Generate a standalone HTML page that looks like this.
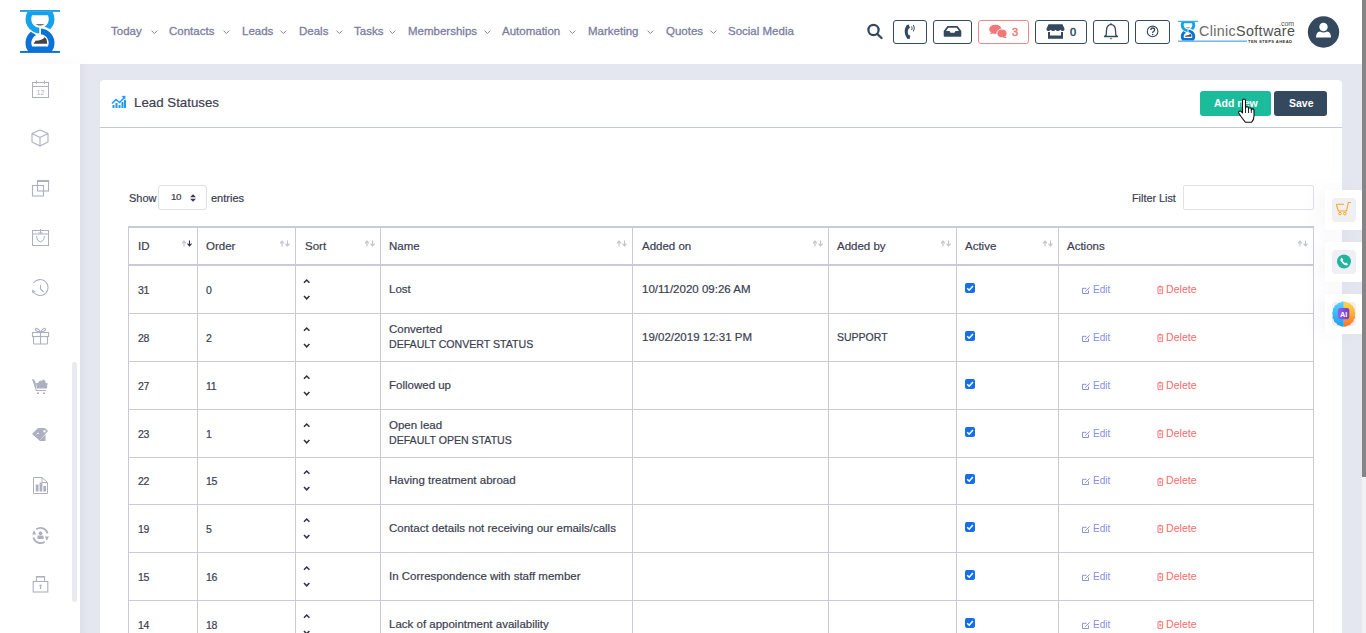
<!DOCTYPE html>
<html><head><meta charset="utf-8">
<style>
*{box-sizing:border-box;margin:0;padding:0}
html,body{width:1366px;height:633px;overflow:hidden;background:#e4e7ef;font-family:"Liberation Sans",sans-serif;}
.a{position:absolute}
svg{position:absolute;overflow:visible}
#header{position:absolute;left:0;top:0;width:1362px;height:64px;background:#fff}
#sidebar{position:absolute;left:0;top:64px;width:80px;height:569px;background:#fff}
.nav{position:absolute;top:24px;font-size:11.5px;color:#7c7d9e;-webkit-text-stroke:0.3px #7c7d9e;white-space:nowrap;line-height:14px}
.hbtn{position:absolute;top:20px;height:24px;border:1.5px solid #34495e;border-radius:3px}
#card{position:absolute;left:100px;top:80px;width:1242px;height:600px;background:#fff;border-radius:4px}
#track{position:absolute;left:1362px;top:0;width:4px;height:633px;background:#f1f1f1}
#thumb{position:absolute;left:1362px;top:0;width:4px;height:477px;background:#858585}
.t{position:absolute;white-space:nowrap;font-size:11.5px;color:#3b3e50;line-height:14px;-webkit-text-stroke:0.2px #3b3e50}
.vl{position:absolute;width:1px;background:#c9ccd8}
.hl{position:absolute;height:1px;background:#c9ccd8}
.edit{position:absolute;white-space:nowrap;font-size:10px;color:#8a8fe0;line-height:12px}
.del{position:absolute;white-space:nowrap;font-size:10.6px;color:#f26b6b;line-height:12px}
.cb{position:absolute;width:10px;height:10px;background:#1a73e8;border-radius:2px}
</style></head><body>
<div id="header"></div>
<div id="sidebar"></div>
<div class="a" style="left:80px;top:64px;width:8px;height:569px;background:linear-gradient(90deg,#dde0e8,#e4e7ef)"></div>
<div id="card"></div>

<svg style="left:0;top:0" width="80" height="64" viewBox="0 0 80 64">
<defs><clipPath id="ct"><polygon points="0,0 80,0 80,44 41,24.8 39.3,24.8 39.3,64 0,64"/></clipPath>
<clipPath id="cb"><polygon points="41,0 80,0 80,64 0,64 0,12.1 41,38.3"/></clipPath></defs>
<rect x="20" y="10" width="40" height="1.9" fill="#1d9ee8"/>
<rect x="20" y="51" width="40" height="1.9" fill="#0b6fd4"/>
<g clip-path="url(#cb)"><path d="M28.25 51.5 A14.5 14.5 0 1 1 51.75 51.5 Z M32.04 46.5 L47.96 46.5 A8.7 8.7 0 1 0 32.04 46.5 Z" fill="#0b72d8" fill-rule="evenodd"/></g>
<g clip-path="url(#ct)"><path d="M27.36 11.9 L52.64 11.9 A14.5 14.5 0 1 1 27.36 11.9 Z M32.06 15.2 L47.94 15.2 A8.8 8.8 0 1 1 32.06 15.2 Z" fill="#15a2ea" fill-rule="evenodd"/></g>
<path d="M35.5 24.2 Q40 26.8 44.6 24.2 Z" fill="#444"/>
<path d="M33.6 43.7 L47.2 43.7 L46.6 39.5 L44.8 37.2 Q42 40.6 35.5 40.8 Z" fill="#444"/>
</svg>
<div class="a" style="left:5px;top:52px;width:90px;height:12px;overflow:hidden"><div style="position:absolute;left:0;top:0;width:90px;height:24px;border-radius:50%;background:radial-gradient(ellipse at center,rgba(0,0,0,0.018),rgba(0,0,0,0.0) 70%)"></div></div>

<div class="nav" style="left:111px">Today</div>
<svg style="left:151px;top:30.3px" width="8" height="5" viewBox="0 0 8 5"><path d="M0.5 0.6 L3.4 3.5 L6.3 0.6" fill="none" stroke="#8585a5" stroke-width="1"/></svg>
<div class="nav" style="left:169px">Contacts</div>
<svg style="left:223px;top:30.3px" width="8" height="5" viewBox="0 0 8 5"><path d="M0.5 0.6 L3.4 3.5 L6.3 0.6" fill="none" stroke="#8585a5" stroke-width="1"/></svg>
<div class="nav" style="left:242px">Leads</div>
<svg style="left:280px;top:30.3px" width="8" height="5" viewBox="0 0 8 5"><path d="M0.5 0.6 L3.4 3.5 L6.3 0.6" fill="none" stroke="#8585a5" stroke-width="1"/></svg>
<div class="nav" style="left:299px">Deals</div>
<svg style="left:335.7px;top:30.3px" width="8" height="5" viewBox="0 0 8 5"><path d="M0.5 0.6 L3.4 3.5 L6.3 0.6" fill="none" stroke="#8585a5" stroke-width="1"/></svg>
<div class="nav" style="left:354px">Tasks</div>
<svg style="left:389.3px;top:30.3px" width="8" height="5" viewBox="0 0 8 5"><path d="M0.5 0.6 L3.4 3.5 L6.3 0.6" fill="none" stroke="#8585a5" stroke-width="1"/></svg>
<div class="nav" style="left:408px">Memberships</div>
<svg style="left:484px;top:30.3px" width="8" height="5" viewBox="0 0 8 5"><path d="M0.5 0.6 L3.4 3.5 L6.3 0.6" fill="none" stroke="#8585a5" stroke-width="1"/></svg>
<div class="nav" style="left:502px">Automation</div>
<svg style="left:569.4px;top:30.3px" width="8" height="5" viewBox="0 0 8 5"><path d="M0.5 0.6 L3.4 3.5 L6.3 0.6" fill="none" stroke="#8585a5" stroke-width="1"/></svg>
<div class="nav" style="left:588px">Marketing</div>
<svg style="left:646.7px;top:30.3px" width="8" height="5" viewBox="0 0 8 5"><path d="M0.5 0.6 L3.4 3.5 L6.3 0.6" fill="none" stroke="#8585a5" stroke-width="1"/></svg>
<div class="nav" style="left:666px">Quotes</div>
<svg style="left:709.8px;top:30.3px" width="8" height="5" viewBox="0 0 8 5"><path d="M0.5 0.6 L3.4 3.5 L6.3 0.6" fill="none" stroke="#8585a5" stroke-width="1"/></svg>
<div class="nav" style="left:728px">Social Media</div>

<svg style="left:862px;top:20px" width="26" height="24" viewBox="0 0 26 24"><circle cx="11.5" cy="10" r="5.1" fill="none" stroke="#34495e" stroke-width="2.3"/><path d="M15.3 14 L19.5 18" stroke="#34495e" stroke-width="2.4" stroke-linecap="round"/></svg>
<div class="hbtn" style="left:893px;width:34px"></div>
<svg style="left:893px;top:20px" width="34" height="24" viewBox="0 0 34 24">
<path d="M13.5 5.2 L15.8 4.4 L17 8 L15.3 9 Q14 12 15.5 15 L17.3 15.6 L16.6 19 L14.2 18.8 Q9.5 12 13.5 5.2 Z" fill="#34495e"/>
<path d="M18.6 6.5 Q19.8 8.2 18.6 10" fill="none" stroke="#34495e" stroke-width="1"/><path d="M20.4 5 Q22.3 8.2 20.4 11.4" fill="none" stroke="#34495e" stroke-width="1"/>
</svg>
<div class="hbtn" style="left:933px;width:39px"></div>
<svg style="left:933px;top:20px" width="39" height="24" viewBox="0 0 39 24">
<path d="M14.5 6 L24.5 6 L28.3 11 L28.3 16 Q28.3 16.8 27.5 16.8 L11.5 16.8 Q10.7 16.8 10.7 16 L10.7 11 Z M13 11 L16.5 11 L17.5 12.8 L21.5 12.8 L22.5 11 L26 11 L23.7 7.8 L15.3 7.8 Z" fill="#34495e" fill-rule="evenodd"/>
</svg>
<div class="hbtn" style="left:978px;width:51px;border-color:#f28686"></div>
<svg style="left:978px;top:20px" width="51" height="24" viewBox="0 0 51 24">
<ellipse cx="17.4" cy="9.3" rx="6.2" ry="4.6" fill="#f07878"/><path d="M13 12.5 L11.5 14.3 L15.5 13.3 Z" fill="#f07878"/>
<ellipse cx="24" cy="13.4" rx="5.1" ry="4.4" fill="#f07878" stroke="#fff" stroke-width="0.9"/><path d="M27.3 16.3 L29 18 L24.5 17.7 Z" fill="#f07878"/>
</svg>
<div class="a" style="left:1012px;top:25px;font-size:11px;line-height:14px;color:#f07878;-webkit-text-stroke:0.5px #f07878">3</div>
<div class="hbtn" style="left:1035px;width:52px"></div>
<svg style="left:1035px;top:20px" width="52" height="24" viewBox="0 0 52 24">
<path d="M13.5 4.3 L27.5 4.3 L29.6 9 Q29.6 11 27.8 11 Q26 11 25.3 9.8 Q24.3 11 22.8 11 Q21.3 11 20.5 9.8 Q19.7 11 18.2 11 Q16.7 11 15.7 9.8 Q15 11 13.2 11 Q11.4 11 11.4 9 Z" fill="#34495e"/>
<path d="M13 12 L15 12 L15 15.5 L26 15.5 L26 12 L28 12 L28 18.7 L13 18.7 Z" fill="#34495e"/>
</svg>
<div class="a" style="left:1070px;top:25px;font-size:11px;line-height:14px;color:#34495e;-webkit-text-stroke:0.5px #34495e">0</div>
<div class="hbtn" style="left:1093px;width:36px"></div>
<svg style="left:1093px;top:20px" width="36" height="24" viewBox="0 0 36 24">
<path d="M18 4.3 Q22.5 5 22.5 10.5 L22.8 15 L24.5 16.5 L11.5 16.5 L13.2 15 L13.5 10.5 Q13.5 5 18 4.3 Z" fill="none" stroke="#34495e" stroke-width="1.3" stroke-linejoin="round"/>
<path d="M16.5 18.3 L19.5 18.3 L18 19.5 Z" fill="#34495e"/><circle cx="18" cy="4" r="0.8" fill="#34495e"/>
</svg>
<div class="hbtn" style="left:1135px;width:35px"></div>
<svg style="left:1135px;top:20px" width="35" height="24" viewBox="0 0 35 24">
<circle cx="17.6" cy="11.4" r="5.3" fill="none" stroke="#34495e" stroke-width="1.1"/>
<path d="M15.8 10 Q15.8 8 17.7 8 Q19.6 8 19.6 9.8 Q19.6 11 18.4 11.5 Q17.7 11.9 17.7 13" fill="none" stroke="#34495e" stroke-width="1.3"/><circle cx="17.7" cy="14.6" r="0.8" fill="#34495e"/>
</svg>


<svg style="left:1176px;top:19px" width="124" height="26" viewBox="0 0 124 26">
<g transform="translate(2,1.8) scale(0.5,0.4745) translate(-20,-10)">
<defs><clipPath id="ct2"><polygon points="0,0 80,0 80,44 41,24.8 39.3,24.8 39.3,64 0,64"/></clipPath>
<clipPath id="cb2"><polygon points="41,0 80,0 80,64 0,64 0,12.1 41,38.3"/></clipPath></defs>
<rect x="20" y="10" width="40" height="2.2" fill="#1d9ee8"/>
<g clip-path="url(#cb2)"><path d="M28.25 51.5 A14.5 14.5 0 1 1 51.75 51.5 Z M32.04 46.5 L47.96 46.5 A8.7 8.7 0 1 0 32.04 46.5 Z" fill="#0b72d8" fill-rule="evenodd"/></g>
<g clip-path="url(#ct2)"><path d="M27.36 11.9 L52.64 11.9 A14.5 14.5 0 1 1 27.36 11.9 Z M32.06 15.2 L47.94 15.2 A8.8 8.8 0 1 1 32.06 15.2 Z" fill="#15a2ea" fill-rule="evenodd"/></g>
<path d="M35.5 24.2 Q40 26.8 44.6 24.2 Z" fill="#555"/>
<path d="M33.6 43.7 L47.2 43.7 L46.6 39.5 L44.8 37.2 Q42 40.6 35.5 40.8 Z" fill="#555"/>
</g>
<rect x="2" y="21.6" width="69" height="1.1" fill="#3a9be6"/>
</svg>
<div class="a" style="left:1199px;top:21.8px;font-size:14.3px;line-height:18px;color:#6a6a6a;letter-spacing:0.35px;white-space:nowrap">Clinic<span style="color:#505050">Software</span></div>
<div class="a" style="left:1279px;top:20px;font-size:7px;line-height:8px;color:#555;white-space:nowrap">.com</div>
<div class="a" style="left:1248px;top:38.5px;font-size:4.2px;line-height:5px;color:#333;font-weight:bold;letter-spacing:0.35px;white-space:nowrap">TEN STEPS AHEAD</div>
<svg style="left:1307px;top:16px" width="33" height="33" viewBox="0 0 33 33">
<circle cx="16.5" cy="16" r="15.7" fill="#34495e"/>
<circle cx="16.5" cy="11" r="4.2" fill="#fff"/>
<path d="M9 21.5 Q9 16 13 15.5 Q16.5 17.3 20 15.5 Q24 16 24 21.5 Z" fill="#fff"/>
</svg>

<svg style="left:24px;top:73px" width="32" height="32" viewBox="0 0 32 32"><g fill="none" stroke="#adb0c0" stroke-width="1"><rect x="8.5" y="9.5" width="16" height="15"/><path d="M8.5 13.5 H24.5 M12.5 7.5 V11 M20.5 7.5 V11"/></g><text x="16.5" y="22" font-size="7" text-anchor="middle" fill="#adb0c0" font-family="Liberation Sans">12</text></svg>
<svg style="left:24px;top:122px" width="32" height="32" viewBox="0 0 32 32"><g fill="none" stroke="#adb0c0" stroke-width="1.1" stroke-linejoin="round"><path d="M16 8 L24 11.5 L24 20 L16 24 L8 20 L8 11.5 Z M8 11.5 L16 15.5 L24 11.5 M16 15.5 V24"/></g></svg>
<svg style="left:24px;top:172px" width="32" height="32" viewBox="0 0 32 32"><g fill="none" stroke="#adb0c0" stroke-width="1.1"><rect x="8.5" y="13.5" width="11" height="10.5"/><rect x="13.5" y="8.5" width="11" height="10.5"/><path d="M13.5 9 H24.5" stroke-width="2"/></g></svg>
<svg style="left:24px;top:221px" width="32" height="32" viewBox="0 0 32 32"><g fill="none" stroke="#adb0c0" stroke-width="1"><rect x="8.5" y="9.5" width="16" height="15"/><path d="M8.5 13 H24.5 M16.5 8 V13 M14.5 11 L16.5 13 L18.5 11 M12.5 15 Q12.5 20 16.5 21 Q20.5 20 20.5 15"/></g></svg>
<svg style="left:24px;top:272px" width="32" height="32" viewBox="0 0 32 32"><g fill="none" stroke="#adb0c0" stroke-width="1.1"><path d="M9.5 11 A8 8 0 1 1 9.8 20.5"/><path d="M16.5 13 V17 L19.5 20"/></g><path d="M8 17.5 L11.5 19.5 L8.5 21.5 Z" fill="#adb0c0"/></svg>
<svg style="left:24px;top:320px" width="32" height="32" viewBox="0 0 32 32"><g fill="none" stroke="#adb0c0" stroke-width="1.1"><rect x="8.5" y="12.5" width="16" height="4"/><rect x="9.5" y="16.5" width="14" height="7.5" rx="1"/><path d="M16.5 12.5 V24 M16.5 12 Q13 7 11.5 9 Q10.5 11 16.5 12 M16.5 12 Q20 7 21.5 9 Q22.5 11 16.5 12"/></g></svg>
<svg style="left:24px;top:370px" width="32" height="32" viewBox="0 0 32 32"><path d="M8 9 Q10 8.5 11.5 12 L12.5 20 L22 20 L22 21 L12 21 Z" fill="#adb0c0"/><path d="M12 13 L23.5 13 L23 18.5 L12.8 18.5 Z" fill="#adb0c0"/><path d="M14 13 Q16 9.5 18 11 Q19.5 8 21.5 11.5 L21.5 13 Z" fill="#adb0c0"/><rect x="13" y="22.5" width="2" height="1.5" fill="#adb0c0"/><rect x="19" y="22.5" width="2" height="1.5" fill="#adb0c0"/></svg>
<svg style="left:24px;top:419px" width="32" height="32" viewBox="0 0 32 32"><path d="M14 9 L21 9 L24 12 L15.5 21.5 L8 15 Z" fill="#adb0c0"/><path d="M21.5 15.5 L21.5 22 L15 22 Z" fill="#adb0c0"/><circle cx="20.5" cy="12.3" r="1.2" fill="#fff"/><path d="M12.5 15.5 Q14 13 15 14.5" stroke="#fff" stroke-width="0.9" fill="none"/></svg>
<svg style="left:24px;top:469px" width="32" height="32" viewBox="0 0 32 32"><g fill="none" stroke="#adb0c0" stroke-width="1"><path d="M9.5 8.5 H18 L23.5 13.5 V24.5 H9.5 Z M18 8.5 V13.5 H23.5"/></g><rect x="11.8" y="15.5" width="2.7" height="7" fill="#adb0c0"/><rect x="15.6" y="13.5" width="2.7" height="9" fill="#adb0c0"/><rect x="19.4" y="17" width="2.7" height="5.5" fill="#adb0c0"/></svg>
<svg style="left:24px;top:519px" width="32" height="32" viewBox="0 0 32 32"><g fill="none" stroke="#adb0c0" stroke-width="1.7"><path d="M12.3 10.3 A7.3 7.3 0 0 1 23.6 14.5"/><path d="M20.7 22.7 A7.3 7.3 0 0 1 9.4 18.5"/><path d="M9.3 15 A7.3 7.3 0 0 1 10.5 11.8" stroke-width="1.2"/><path d="M23.7 18 A7.3 7.3 0 0 1 22.5 21.2" stroke-width="1.2"/></g><path d="M8 15.5 L10.5 12 L12 15.5 Z" fill="#adb0c0"/><path d="M25 17.5 L22.5 21 L21 17.5 Z" fill="#adb0c0"/><circle cx="16.5" cy="14.3" r="1.9" fill="#adb0c0"/><path d="M13.4 20 V17.8 Q13.4 16.6 14.6 16.6 H18.4 Q19.6 16.6 19.6 17.8 V20 Z" fill="#adb0c0"/></svg>
<svg style="left:24px;top:568px" width="32" height="32" viewBox="0 0 32 32"><g fill="none" stroke="#adb0c0" stroke-width="1.1"><rect x="9.2" y="13.5" width="14.6" height="10.5"/></g><path d="M12.5 13.5 V8.5 H20.5 V13.5" fill="none" stroke="#adb0c0" stroke-width="1.1"/><rect x="12.5" y="8" width="8" height="1.6" fill="#adb0c0"/><path d="M16.5 17.5 V21" stroke="#adb0c0" stroke-width="1.2"/><circle cx="16.5" cy="17.5" r="1.1" fill="#adb0c0"/></svg>
<div class="a" style="left:72px;top:362px;width:5px;height:240px;border-radius:2.5px;background:#e9ebf3"></div>

<div class="a" style="left:100px;top:127px;width:1242px;height:1px;background:#c5c9d6"></div>
<svg style="left:111px;top:95px" width="16" height="14" viewBox="0 0 16 14">
<path d="M1 8.5 L5 4.5 L8.5 7.5 L13 3" fill="none" stroke="#1e9cf0" stroke-width="1.6"/><path d="M10.5 1 L14.5 0.8 L14.3 4.8 Z" fill="#1e9cf0"/>
<rect x="1.5" y="10" width="2" height="3" fill="#1e9cf0"/><rect x="4.5" y="8" width="2" height="5" fill="#1e9cf0"/><rect x="7.5" y="10" width="2" height="3" fill="#1e9cf0"/><rect x="10.5" y="7" width="2" height="6" fill="#1e9cf0"/><rect x="13" y="5" width="2" height="8" fill="#1e9cf0"/>
</svg>
<div class="a" style="left:134px;top:95px;font-size:13.3px;line-height:16px;color:#3e4152;-webkit-text-stroke:0.2px #3e4152;white-space:nowrap">Lead Statuses</div>
<div class="a" style="left:1200px;top:91px;width:71px;height:25px;background:#1abc9c;border-radius:3px"></div>
<div class="a" style="left:1214px;top:97px;font-size:10.5px;line-height:12px;color:#fff;font-weight:bold;white-space:nowrap">Add new</div>
<div class="a" style="left:1274px;top:91px;width:53px;height:25px;background:#34495e;border-radius:3px"></div>
<div class="a" style="left:1289px;top:97px;font-size:10.5px;line-height:12px;color:#fff;font-weight:bold;white-space:nowrap">Save</div>

<svg style="left:1237px;top:98px" width="20" height="26" viewBox="0 0 20 26">
<path d="M5.5 2.5 Q5.5 1 7 1 Q8.5 1 8.5 2.5 L8.5 10 Q8.5 8.6 10 8.6 Q11.5 8.6 11.5 10 L11.5 11 Q11.5 9.8 12.9 9.8 Q14.3 9.8 14.3 11.2 L14.3 12 Q14.3 10.9 15.6 10.9 Q17 10.9 17 12.3 L17 18 Q17 22 14.5 24.3 L8.5 24.3 Q6.5 22 4 18.5 L2 15.5 Q1 14 2.3 13.2 Q3.5 12.5 4.6 13.8 L5.5 15 Z" fill="#fff" stroke="#111" stroke-width="1.1" stroke-linejoin="round"/>
<path d="M8.5 10 V15 M11.5 11 V15 M14.3 12 V15" stroke="#111" stroke-width="0.9"/>
</svg>

<div class="t" style="left:129px;top:190.7px;font-size:11px">Show</div>
<div class="a" style="left:158px;top:185px;width:49px;height:25px;border:1px solid #dfe1e8;border-radius:3px"></div>
<div class="t" style="left:171px;top:190.5px;font-size:9.8px;line-height:12px;letter-spacing:-0.5px">10</div>
<svg style="left:190px;top:194px" width="6" height="8" viewBox="0 0 6 8"><path d="M0.3 3.3 Q0 3.3 0.3 2.9 L2.7 0.4 Q3 0.1 3.3 0.4 L5.7 2.9 Q6 3.3 5.7 3.3 Z M0.3 4.7 Q0 4.7 0.3 5.1 L2.7 7.6 Q3 7.9 3.3 7.6 L5.7 5.1 Q6 4.7 5.7 4.7 Z" fill="#3b3e50"/></svg>
<div class="t" style="left:211px;top:190.7px;font-size:11px">entries</div>
<div class="t" style="left:1132px;top:190.7px;font-size:10.8px">Filter List</div>
<div class="a" style="left:1183px;top:185px;width:131px;height:25px;border:1px solid #dfe1e8;border-radius:2px"></div>

<div class="a" style="left:128px;top:226px;width:1186px;height:2px;background:#c9ccd8"></div>
<div class="a" style="left:128px;top:264px;width:1186px;height:2px;background:#c9ccd8"></div>
<div class="a" style="left:128px;top:226px;width:1px;height:420px;background:#c9ccd8"></div>
<div class="a" style="left:197px;top:226px;width:1px;height:420px;background:#c9ccd8"></div>
<div class="a" style="left:295px;top:226px;width:1px;height:420px;background:#c9ccd8"></div>
<div class="a" style="left:380px;top:226px;width:1px;height:420px;background:#c9ccd8"></div>
<div class="a" style="left:632px;top:226px;width:1px;height:420px;background:#c9ccd8"></div>
<div class="a" style="left:828px;top:226px;width:1px;height:420px;background:#c9ccd8"></div>
<div class="a" style="left:956px;top:226px;width:1px;height:420px;background:#c9ccd8"></div>
<div class="a" style="left:1058px;top:226px;width:1px;height:420px;background:#c9ccd8"></div>
<div class="a" style="left:1313px;top:226px;width:1px;height:420px;background:#c9ccd8"></div>
<div class="a" style="left:128px;top:313px;width:1186px;height:1px;background:#c9ccd8"></div>
<div class="a" style="left:128px;top:361px;width:1186px;height:1px;background:#c9ccd8"></div>
<div class="a" style="left:128px;top:409px;width:1186px;height:1px;background:#c9ccd8"></div>
<div class="a" style="left:128px;top:457px;width:1186px;height:1px;background:#c9ccd8"></div>
<div class="a" style="left:128px;top:504px;width:1186px;height:1px;background:#c9ccd8"></div>
<div class="a" style="left:128px;top:552px;width:1186px;height:1px;background:#c9ccd8"></div>
<div class="a" style="left:128px;top:600px;width:1186px;height:1px;background:#c9ccd8"></div>
<div class="a" style="left:128px;top:648px;width:1186px;height:1px;background:#c9ccd8"></div>
<div class="t" style="left:138px;top:239px;font-size:11.5px">ID</div>
<svg style="left:181px;top:240px" width="12" height="7" viewBox="0 0 12 7"><path d="M3 6.5 V1.5 M1 3.3 L3 1 L5 3.3" fill="none" stroke="#c0c2cc" stroke-width="1.1"/><path d="M8.5 0.5 V5.5 M6.5 3.7 L8.5 6 L10.5 3.7" fill="none" stroke="#2d3142" stroke-width="1.1"/></svg>
<div class="t" style="left:206px;top:239px;font-size:11.5px">Order</div>
<svg style="left:279px;top:240px" width="12" height="7" viewBox="0 0 12 7"><path d="M3 6.5 V1.5 M1 3.3 L3 1 L5 3.3" fill="none" stroke="#c0c2cc" stroke-width="1.1"/><path d="M8.5 0.5 V5.5 M6.5 3.7 L8.5 6 L10.5 3.7" fill="none" stroke="#c0c2cc" stroke-width="1.1"/></svg>
<div class="t" style="left:305px;top:239px;font-size:11.5px">Sort</div>
<svg style="left:364px;top:240px" width="12" height="7" viewBox="0 0 12 7"><path d="M3 6.5 V1.5 M1 3.3 L3 1 L5 3.3" fill="none" stroke="#c0c2cc" stroke-width="1.1"/><path d="M8.5 0.5 V5.5 M6.5 3.7 L8.5 6 L10.5 3.7" fill="none" stroke="#c0c2cc" stroke-width="1.1"/></svg>
<div class="t" style="left:389px;top:239px;font-size:11.5px">Name</div>
<svg style="left:616px;top:240px" width="12" height="7" viewBox="0 0 12 7"><path d="M3 6.5 V1.5 M1 3.3 L3 1 L5 3.3" fill="none" stroke="#c0c2cc" stroke-width="1.1"/><path d="M8.5 0.5 V5.5 M6.5 3.7 L8.5 6 L10.5 3.7" fill="none" stroke="#c0c2cc" stroke-width="1.1"/></svg>
<div class="t" style="left:642px;top:239px;font-size:11.5px">Added on</div>
<svg style="left:812px;top:240px" width="12" height="7" viewBox="0 0 12 7"><path d="M3 6.5 V1.5 M1 3.3 L3 1 L5 3.3" fill="none" stroke="#c0c2cc" stroke-width="1.1"/><path d="M8.5 0.5 V5.5 M6.5 3.7 L8.5 6 L10.5 3.7" fill="none" stroke="#c0c2cc" stroke-width="1.1"/></svg>
<div class="t" style="left:837px;top:239px;font-size:11.5px">Added by</div>
<svg style="left:940px;top:240px" width="12" height="7" viewBox="0 0 12 7"><path d="M3 6.5 V1.5 M1 3.3 L3 1 L5 3.3" fill="none" stroke="#c0c2cc" stroke-width="1.1"/><path d="M8.5 0.5 V5.5 M6.5 3.7 L8.5 6 L10.5 3.7" fill="none" stroke="#c0c2cc" stroke-width="1.1"/></svg>
<div class="t" style="left:965px;top:239px;font-size:11.5px">Active</div>
<svg style="left:1042px;top:240px" width="12" height="7" viewBox="0 0 12 7"><path d="M3 6.5 V1.5 M1 3.3 L3 1 L5 3.3" fill="none" stroke="#c0c2cc" stroke-width="1.1"/><path d="M8.5 0.5 V5.5 M6.5 3.7 L8.5 6 L10.5 3.7" fill="none" stroke="#c0c2cc" stroke-width="1.1"/></svg>
<div class="t" style="left:1067px;top:239px;font-size:11.5px">Actions</div>
<svg style="left:1297px;top:240px" width="12" height="7" viewBox="0 0 12 7"><path d="M3 6.5 V1.5 M1 3.3 L3 1 L5 3.3" fill="none" stroke="#c0c2cc" stroke-width="1.1"/><path d="M8.5 0.5 V5.5 M6.5 3.7 L8.5 6 L10.5 3.7" fill="none" stroke="#c0c2cc" stroke-width="1.1"/></svg>
<div class="t" style="left:138px;top:282.5px;font-size:10.5px;letter-spacing:-0.4px">31</div>
<div class="t" style="left:206px;top:282.5px;font-size:10.5px;letter-spacing:-0.4px">0</div>
<svg style="left:303px;top:278.5px" width="8" height="21" viewBox="0 0 8 21"><path d="M1 3.8 L3.7 1 L6.4 3.8 M1 17 L3.7 19.8 L6.4 17" fill="none" stroke="#2d3142" stroke-width="1.5"/></svg>
<div class="t" style="left:389px;top:281.75px">Lost</div>
<div class="t" style="left:642px;top:281.75px">10/11/2020 09:26 AM</div>
<svg style="left:965px;top:282.5px" width="10" height="10" viewBox="0 0 10 10"><rect x="0" y="0" width="10" height="10" rx="2" fill="#1370e8"/><path d="M2.2 5.2 L4.2 7.2 L7.9 2.9" fill="none" stroke="#fff" stroke-width="1.5"/></svg>
<svg style="left:1082px;top:286.5px" width="9" height="8" viewBox="0 0 9 8"><path d="M4.5 1.3 H0.5 V6.5 H6.5 V3.5" fill="none" stroke="#8a8fe0" stroke-width="1"/><path d="M3.2 4.8 L7.8 0.3" stroke="#8a8fe0" stroke-width="1"/></svg>
<div class="edit" style="left:1093px;top:283.5px">Edit</div>
<svg style="left:1157px;top:286.0px" width="7" height="8" viewBox="0 0 7 8"><path d="M0.3 1 H6.3 M2.5 1 V0.2 H4.1 V1" fill="none" stroke="#f26b6b" stroke-width="0.9"/><path d="M1 1.6 V7.4 H5.6 V1.6" fill="none" stroke="#f26b6b" stroke-width="0.9"/><rect x="2.2" y="3" width="2.2" height="2.6" fill="#f5a0a0"/></svg>
<div class="del" style="left:1166px;top:282.5px">Delete</div>
<div class="t" style="left:138px;top:330.5px;font-size:10.5px;letter-spacing:-0.4px">28</div>
<div class="t" style="left:206px;top:330.5px;font-size:10.5px;letter-spacing:-0.4px">2</div>
<svg style="left:303px;top:326.5px" width="8" height="21" viewBox="0 0 8 21"><path d="M1 3.8 L3.7 1 L6.4 3.8 M1 17 L3.7 19.8 L6.4 17" fill="none" stroke="#2d3142" stroke-width="1.5"/></svg>
<div class="t" style="left:389px;top:321.5px">Converted</div>
<div class="t" style="left:389px;top:337.0px;font-size:10.6px">DEFAULT CONVERT STATUS</div>
<div class="t" style="left:642px;top:329.75px">19/02/2019 12:31 PM</div>
<div class="t" style="left:837px;top:330.25px;font-size:10.5px">SUPPORT</div>
<svg style="left:965px;top:330.5px" width="10" height="10" viewBox="0 0 10 10"><rect x="0" y="0" width="10" height="10" rx="2" fill="#1370e8"/><path d="M2.2 5.2 L4.2 7.2 L7.9 2.9" fill="none" stroke="#fff" stroke-width="1.5"/></svg>
<svg style="left:1082px;top:334.5px" width="9" height="8" viewBox="0 0 9 8"><path d="M4.5 1.3 H0.5 V6.5 H6.5 V3.5" fill="none" stroke="#8a8fe0" stroke-width="1"/><path d="M3.2 4.8 L7.8 0.3" stroke="#8a8fe0" stroke-width="1"/></svg>
<div class="edit" style="left:1093px;top:331.5px">Edit</div>
<svg style="left:1157px;top:334.0px" width="7" height="8" viewBox="0 0 7 8"><path d="M0.3 1 H6.3 M2.5 1 V0.2 H4.1 V1" fill="none" stroke="#f26b6b" stroke-width="0.9"/><path d="M1 1.6 V7.4 H5.6 V1.6" fill="none" stroke="#f26b6b" stroke-width="0.9"/><rect x="2.2" y="3" width="2.2" height="2.6" fill="#f5a0a0"/></svg>
<div class="del" style="left:1166px;top:330.5px">Delete</div>
<div class="t" style="left:138px;top:378.5px;font-size:10.5px;letter-spacing:-0.4px">27</div>
<div class="t" style="left:206px;top:378.5px;font-size:10.5px;letter-spacing:-0.4px">11</div>
<svg style="left:303px;top:374.5px" width="8" height="21" viewBox="0 0 8 21"><path d="M1 3.8 L3.7 1 L6.4 3.8 M1 17 L3.7 19.8 L6.4 17" fill="none" stroke="#2d3142" stroke-width="1.5"/></svg>
<div class="t" style="left:389px;top:377.75px">Followed up</div>
<svg style="left:965px;top:378.5px" width="10" height="10" viewBox="0 0 10 10"><rect x="0" y="0" width="10" height="10" rx="2" fill="#1370e8"/><path d="M2.2 5.2 L4.2 7.2 L7.9 2.9" fill="none" stroke="#fff" stroke-width="1.5"/></svg>
<svg style="left:1082px;top:382.5px" width="9" height="8" viewBox="0 0 9 8"><path d="M4.5 1.3 H0.5 V6.5 H6.5 V3.5" fill="none" stroke="#8a8fe0" stroke-width="1"/><path d="M3.2 4.8 L7.8 0.3" stroke="#8a8fe0" stroke-width="1"/></svg>
<div class="edit" style="left:1093px;top:379.5px">Edit</div>
<svg style="left:1157px;top:382.0px" width="7" height="8" viewBox="0 0 7 8"><path d="M0.3 1 H6.3 M2.5 1 V0.2 H4.1 V1" fill="none" stroke="#f26b6b" stroke-width="0.9"/><path d="M1 1.6 V7.4 H5.6 V1.6" fill="none" stroke="#f26b6b" stroke-width="0.9"/><rect x="2.2" y="3" width="2.2" height="2.6" fill="#f5a0a0"/></svg>
<div class="del" style="left:1166px;top:378.5px">Delete</div>
<div class="t" style="left:138px;top:426.5px;font-size:10.5px;letter-spacing:-0.4px">23</div>
<div class="t" style="left:206px;top:426.5px;font-size:10.5px;letter-spacing:-0.4px">1</div>
<svg style="left:303px;top:422.5px" width="8" height="21" viewBox="0 0 8 21"><path d="M1 3.8 L3.7 1 L6.4 3.8 M1 17 L3.7 19.8 L6.4 17" fill="none" stroke="#2d3142" stroke-width="1.5"/></svg>
<div class="t" style="left:389px;top:417.5px">Open lead</div>
<div class="t" style="left:389px;top:433.0px;font-size:10.6px">DEFAULT OPEN STATUS</div>
<svg style="left:965px;top:426.5px" width="10" height="10" viewBox="0 0 10 10"><rect x="0" y="0" width="10" height="10" rx="2" fill="#1370e8"/><path d="M2.2 5.2 L4.2 7.2 L7.9 2.9" fill="none" stroke="#fff" stroke-width="1.5"/></svg>
<svg style="left:1082px;top:430.5px" width="9" height="8" viewBox="0 0 9 8"><path d="M4.5 1.3 H0.5 V6.5 H6.5 V3.5" fill="none" stroke="#8a8fe0" stroke-width="1"/><path d="M3.2 4.8 L7.8 0.3" stroke="#8a8fe0" stroke-width="1"/></svg>
<div class="edit" style="left:1093px;top:427.5px">Edit</div>
<svg style="left:1157px;top:430.0px" width="7" height="8" viewBox="0 0 7 8"><path d="M0.3 1 H6.3 M2.5 1 V0.2 H4.1 V1" fill="none" stroke="#f26b6b" stroke-width="0.9"/><path d="M1 1.6 V7.4 H5.6 V1.6" fill="none" stroke="#f26b6b" stroke-width="0.9"/><rect x="2.2" y="3" width="2.2" height="2.6" fill="#f5a0a0"/></svg>
<div class="del" style="left:1166px;top:426.5px">Delete</div>
<div class="t" style="left:138px;top:474.0px;font-size:10.5px;letter-spacing:-0.4px">22</div>
<div class="t" style="left:206px;top:474.0px;font-size:10.5px;letter-spacing:-0.4px">15</div>
<svg style="left:303px;top:470.0px" width="8" height="21" viewBox="0 0 8 21"><path d="M1 3.8 L3.7 1 L6.4 3.8 M1 17 L3.7 19.8 L6.4 17" fill="none" stroke="#2d3142" stroke-width="1.5"/></svg>
<div class="t" style="left:389px;top:473.25px">Having treatment abroad</div>
<svg style="left:965px;top:474.0px" width="10" height="10" viewBox="0 0 10 10"><rect x="0" y="0" width="10" height="10" rx="2" fill="#1370e8"/><path d="M2.2 5.2 L4.2 7.2 L7.9 2.9" fill="none" stroke="#fff" stroke-width="1.5"/></svg>
<svg style="left:1082px;top:478.0px" width="9" height="8" viewBox="0 0 9 8"><path d="M4.5 1.3 H0.5 V6.5 H6.5 V3.5" fill="none" stroke="#8a8fe0" stroke-width="1"/><path d="M3.2 4.8 L7.8 0.3" stroke="#8a8fe0" stroke-width="1"/></svg>
<div class="edit" style="left:1093px;top:475.0px">Edit</div>
<svg style="left:1157px;top:477.5px" width="7" height="8" viewBox="0 0 7 8"><path d="M0.3 1 H6.3 M2.5 1 V0.2 H4.1 V1" fill="none" stroke="#f26b6b" stroke-width="0.9"/><path d="M1 1.6 V7.4 H5.6 V1.6" fill="none" stroke="#f26b6b" stroke-width="0.9"/><rect x="2.2" y="3" width="2.2" height="2.6" fill="#f5a0a0"/></svg>
<div class="del" style="left:1166px;top:474.0px">Delete</div>
<div class="t" style="left:138px;top:521.5px;font-size:10.5px;letter-spacing:-0.4px">19</div>
<div class="t" style="left:206px;top:521.5px;font-size:10.5px;letter-spacing:-0.4px">5</div>
<svg style="left:303px;top:517.5px" width="8" height="21" viewBox="0 0 8 21"><path d="M1 3.8 L3.7 1 L6.4 3.8 M1 17 L3.7 19.8 L6.4 17" fill="none" stroke="#2d3142" stroke-width="1.5"/></svg>
<div class="t" style="left:389px;top:520.75px">Contact details not receiving our emails/calls</div>
<svg style="left:965px;top:521.5px" width="10" height="10" viewBox="0 0 10 10"><rect x="0" y="0" width="10" height="10" rx="2" fill="#1370e8"/><path d="M2.2 5.2 L4.2 7.2 L7.9 2.9" fill="none" stroke="#fff" stroke-width="1.5"/></svg>
<svg style="left:1082px;top:525.5px" width="9" height="8" viewBox="0 0 9 8"><path d="M4.5 1.3 H0.5 V6.5 H6.5 V3.5" fill="none" stroke="#8a8fe0" stroke-width="1"/><path d="M3.2 4.8 L7.8 0.3" stroke="#8a8fe0" stroke-width="1"/></svg>
<div class="edit" style="left:1093px;top:522.5px">Edit</div>
<svg style="left:1157px;top:525.0px" width="7" height="8" viewBox="0 0 7 8"><path d="M0.3 1 H6.3 M2.5 1 V0.2 H4.1 V1" fill="none" stroke="#f26b6b" stroke-width="0.9"/><path d="M1 1.6 V7.4 H5.6 V1.6" fill="none" stroke="#f26b6b" stroke-width="0.9"/><rect x="2.2" y="3" width="2.2" height="2.6" fill="#f5a0a0"/></svg>
<div class="del" style="left:1166px;top:521.5px">Delete</div>
<div class="t" style="left:138px;top:569.5px;font-size:10.5px;letter-spacing:-0.4px">15</div>
<div class="t" style="left:206px;top:569.5px;font-size:10.5px;letter-spacing:-0.4px">16</div>
<svg style="left:303px;top:565.5px" width="8" height="21" viewBox="0 0 8 21"><path d="M1 3.8 L3.7 1 L6.4 3.8 M1 17 L3.7 19.8 L6.4 17" fill="none" stroke="#2d3142" stroke-width="1.5"/></svg>
<div class="t" style="left:389px;top:568.75px">In Correspondence with staff member</div>
<svg style="left:965px;top:569.5px" width="10" height="10" viewBox="0 0 10 10"><rect x="0" y="0" width="10" height="10" rx="2" fill="#1370e8"/><path d="M2.2 5.2 L4.2 7.2 L7.9 2.9" fill="none" stroke="#fff" stroke-width="1.5"/></svg>
<svg style="left:1082px;top:573.5px" width="9" height="8" viewBox="0 0 9 8"><path d="M4.5 1.3 H0.5 V6.5 H6.5 V3.5" fill="none" stroke="#8a8fe0" stroke-width="1"/><path d="M3.2 4.8 L7.8 0.3" stroke="#8a8fe0" stroke-width="1"/></svg>
<div class="edit" style="left:1093px;top:570.5px">Edit</div>
<svg style="left:1157px;top:573.0px" width="7" height="8" viewBox="0 0 7 8"><path d="M0.3 1 H6.3 M2.5 1 V0.2 H4.1 V1" fill="none" stroke="#f26b6b" stroke-width="0.9"/><path d="M1 1.6 V7.4 H5.6 V1.6" fill="none" stroke="#f26b6b" stroke-width="0.9"/><rect x="2.2" y="3" width="2.2" height="2.6" fill="#f5a0a0"/></svg>
<div class="del" style="left:1166px;top:569.5px">Delete</div>
<div class="t" style="left:138px;top:617.5px;font-size:10.5px;letter-spacing:-0.4px">14</div>
<div class="t" style="left:206px;top:617.5px;font-size:10.5px;letter-spacing:-0.4px">18</div>
<svg style="left:303px;top:613.5px" width="8" height="21" viewBox="0 0 8 21"><path d="M1 3.8 L3.7 1 L6.4 3.8 M1 17 L3.7 19.8 L6.4 17" fill="none" stroke="#2d3142" stroke-width="1.5"/></svg>
<div class="t" style="left:389px;top:616.75px">Lack of appointment availability</div>
<svg style="left:965px;top:617.5px" width="10" height="10" viewBox="0 0 10 10"><rect x="0" y="0" width="10" height="10" rx="2" fill="#1370e8"/><path d="M2.2 5.2 L4.2 7.2 L7.9 2.9" fill="none" stroke="#fff" stroke-width="1.5"/></svg>
<svg style="left:1082px;top:621.5px" width="9" height="8" viewBox="0 0 9 8"><path d="M4.5 1.3 H0.5 V6.5 H6.5 V3.5" fill="none" stroke="#8a8fe0" stroke-width="1"/><path d="M3.2 4.8 L7.8 0.3" stroke="#8a8fe0" stroke-width="1"/></svg>
<div class="edit" style="left:1093px;top:618.5px">Edit</div>
<svg style="left:1157px;top:621.0px" width="7" height="8" viewBox="0 0 7 8"><path d="M0.3 1 H6.3 M2.5 1 V0.2 H4.1 V1" fill="none" stroke="#f26b6b" stroke-width="0.9"/><path d="M1 1.6 V7.4 H5.6 V1.6" fill="none" stroke="#f26b6b" stroke-width="0.9"/><rect x="2.2" y="3" width="2.2" height="2.6" fill="#f5a0a0"/></svg>
<div class="del" style="left:1166px;top:617.5px">Delete</div>
<div class="a" style="left:1325px;top:190px;width:37px;height:40px;background:#fff;border-radius:4px 0 0 4px;box-shadow:-8px 0 22px rgba(0,0,0,0.035)"></div>
<div class="a" style="left:1332px;top:198px;width:24px;height:24px;background:#efeff4;border-radius:4px"></div>
<div class="a" style="left:1325px;top:242px;width:37px;height:40px;background:#fff;border-radius:4px 0 0 4px;box-shadow:-8px 0 22px rgba(0,0,0,0.035)"></div>
<div class="a" style="left:1332px;top:250px;width:24px;height:24px;background:#efeff4;border-radius:4px"></div>
<div class="a" style="left:1325px;top:294px;width:37px;height:40px;background:#fff;border-radius:4px 0 0 4px;box-shadow:-8px 0 22px rgba(0,0,0,0.035)"></div>
<div class="a" style="left:1332px;top:302px;width:24px;height:24px;background:#efeff4;border-radius:4px"></div>
<svg style="left:1332px;top:198px" width="24" height="24" viewBox="0 0 24 24">
<path d="M4.3 6.3 H12 M4.3 6.3 L6.3 13 H14.5 L16.3 4.5 H19" fill="none" stroke="#f7a81b" stroke-width="1.1"/>
<circle cx="8" cy="15.6" r="1.3" fill="none" stroke="#f7a81b" stroke-width="1"/><circle cx="12.8" cy="15.6" r="1.3" fill="none" stroke="#f7a81b" stroke-width="1"/>
</svg>
<svg style="left:1332px;top:250px" width="24" height="24" viewBox="0 0 24 24">
<circle cx="12" cy="11.5" r="7" fill="#20b59e"/>
<path d="M9.6 7.6 L11.3 9.6 L10.6 10.6 Q11.4 12.3 13.2 13.2 L14.2 12.5 L16.1 14.3 Q15.5 15.6 14 15.4 Q10.6 14.6 8.6 10.8 Q8 9 9.6 7.6 Z" fill="#fff"/>
</svg>
<svg style="left:1332px;top:302px" width="24" height="24" viewBox="0 0 24 24">
<defs><linearGradient id="gl" x1="0" x2="0" y1="0" y2="1"><stop offset="0" stop-color="#5ad0fb"/><stop offset="1" stop-color="#1e9ff2"/></linearGradient><linearGradient id="gr" x1="0" x2="0" y1="0" y2="1"><stop offset="0" stop-color="#ffd84a"/><stop offset="0.5" stop-color="#ffae35"/><stop offset="1" stop-color="#ff6f2a"/></linearGradient>
<linearGradient id="gp" x1="0" x2="1"><stop offset="0" stop-color="#9b5de5"/><stop offset="1" stop-color="#6a3fd0"/></linearGradient></defs>
<path d="M11.8 -0.5 Q9.5 -1 8.5 0.8 Q6 0.3 5 2.5 Q2.5 2.8 2.3 5.3 Q0.2 6.5 1 9 Q-0.5 11 0.8 13.3 Q-0.3 15.8 1.8 17.5 Q1.5 20.3 4.3 21 Q5 23.5 7.8 23.5 Q9.5 25 11.8 24.5 Z" fill="url(#gl)"/>
<path d="M11.8 -0.5 Q14.1 -1 15.1 0.8 Q17.6 0.3 18.6 2.5 Q21.1 2.8 21.3 5.3 Q23.4 6.5 22.6 9 Q24.1 11 22.8 13.3 Q23.9 15.8 21.8 17.5 Q22.1 20.3 19.3 21 Q18.6 23.5 15.8 23.5 Q14.1 25 11.8 24.5 Z" fill="url(#gr)"/>
<rect x="6" y="6" width="11.3" height="11.3" rx="2.5" fill="url(#gp)"/>
<text x="11.7" y="14.6" font-size="7.3" font-weight="bold" text-anchor="middle" fill="#fff" font-family="Liberation Sans">AI</text>
</svg>

<div id="track"></div><div id="thumb"></div>
</body></html>
